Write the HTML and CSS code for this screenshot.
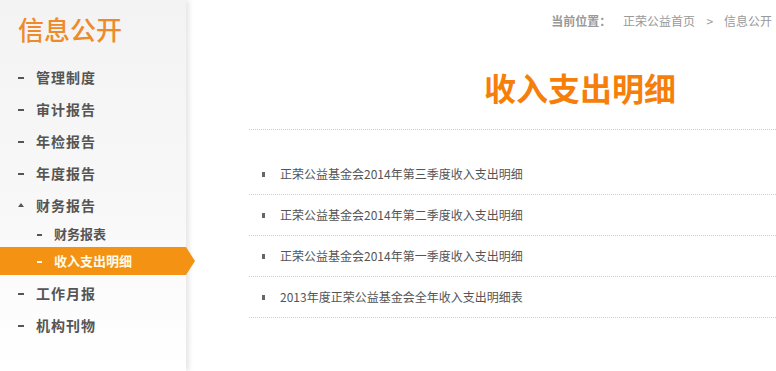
FILE: index.html
```html
<!DOCTYPE html>
<html lang="zh-CN">
<head>
<meta charset="utf-8">
<title>收入支出明细</title>
<link rel="stylesheet" href="styles.css">
</head>
<body>
<div class="page">
  <aside class="sidebar">
    <h2 class="side-title">信息公开</h2>
    <ul class="side-nav">
      <li class="nav-item"><a href="#">管理制度</a></li>
      <li class="nav-item"><a href="#">审计报告</a></li>
      <li class="nav-item"><a href="#">年检报告</a></li>
      <li class="nav-item"><a href="#">年度报告</a></li>
      <li class="nav-item open"><a href="#">财务报告</a>
        <ul class="sub-nav">
          <li class="sub-item"><a href="#">财务报表</a></li>
          <li class="sub-item active"><a href="#">收入支出明细</a></li>
        </ul>
      </li>
      <li class="nav-item"><a href="#">工作月报</a></li>
      <li class="nav-item"><a href="#">机构刊物</a></li>
    </ul>
  </aside>
  <main class="main">
    <div class="crumbs">
      <span class="crumb-label">当前位置：</span>
      <a href="#">正荣公益首页</a>
      <span class="crumb-sep">&gt;</span>
      <a href="#">信息公开</a>
    </div>
    <h1 class="page-title">收入支出明细</h1>
    <ul class="doc-list">
      <li><a href="#">正荣公益基金会2014年第三季度收入支出明细</a></li>
      <li><a href="#">正荣公益基金会2014年第二季度收入支出明细</a></li>
      <li><a href="#">正荣公益基金会2014年第一季度收入支出明细</a></li>
      <li><a href="#">2013年度正荣公益基金会全年收入支出明细表</a></li>
    </ul>
  </main>
</div>
</body>
</html>
```

FILE: styles.css
```css
html, body {
  margin: 0;
  padding: 0;
  background: #fff;
  overflow: hidden;
}
body {
  font-family: "Noto Sans CJK SC", "Liberation Sans", sans-serif;
  color: #555;
}
ul {
  list-style: none;
  margin: 0;
  padding: 0;
}
a {
  color: inherit;
  text-decoration: none;
}

.page {
  display: flex;
  width: 776px;
  height: 371px;
}

/* Sidebar */
.sidebar {
  position: relative;
  width: 186px;
  flex: none;
  height: 371px;
  background: linear-gradient(to bottom, #f3f3f3 0%, #f8f8f8 55%, #ffffff 100%);
  box-shadow: 3px 0 5px rgba(0, 0, 0, 0.10);
  z-index: 1;
}
.side-title {
  margin: 0;
  padding: 15px 0 18px 18px;
  font-size: 26px;
  line-height: 28px;
  font-weight: 500;
  color: #ef8a2b;
  letter-spacing: 0;
}
.nav-item > a {
  position: relative;
  display: block;
  height: 32px;
  line-height: 32px;
  padding-left: 36px;
  font-size: 14px;
  font-weight: 700;
  letter-spacing: 1px;
  color: #555;
}
.nav-item > a::before {
  content: "";
  position: absolute;
  left: 18px;
  top: 16px;
  width: 6px;
  height: 2px;
  background: #555;
}
.nav-item.open > a::before {
  top: 14px;
  width: 0;
  height: 0;
  background: none;
  border-left: 3px solid transparent;
  border-right: 3px solid transparent;
  border-bottom: 4px solid #555;
}
.sub-nav {
  margin-bottom: 2px;
}
.sub-item > a {
  position: relative;
  display: block;
  height: 26px;
  line-height: 26px;
  padding-left: 54px;
  font-size: 13px;
  font-weight: 700;
  color: #555;
}
.sub-item > a::before {
  content: "";
  position: absolute;
  left: 37px;
  top: 13px;
  width: 5px;
  height: 2px;
  background: #555;
}
.sub-item.active > a {
  height: 28px;
  line-height: 28px;
  background: #f39213;
  color: #fffbe8;
}
.sub-item.active > a::before {
  top: 14px;
  background: #fffbe8;
}
.sub-item.active > a::after {
  content: "";
  position: absolute;
  right: -9px;
  top: 0;
  width: 0;
  height: 0;
  border-top: 14px solid transparent;
  border-bottom: 14px solid transparent;
  border-left: 9px solid #f39213;
}

/* Main */
.main {
  flex: 1;
  min-width: 0;
  margin-left: 63px;
}
.crumbs {
  padding: 10px 4px 0 0;
  height: 22px;
  line-height: 22px;
  text-align: right;
  font-size: 12px;
  color: #999;
  white-space: nowrap;
}
.crumb-label {
  font-weight: 700;
  margin-right: 9px;
}
.crumb-sep {
  margin: 0 8px 0 9px;
}
.page-title {
  margin: 0;
  padding: 35px 0 22px 135px;
  height: 40px;
  line-height: 40px;
  text-align: center;
  font-size: 32px;
  font-weight: 700;
  color: #f67f0c;
  border-bottom: 1px dotted #cfcfcf;
}
.doc-list {
  padding-top: 24px;
}
.doc-list li {
  position: relative;
  height: 40px;
  line-height: 40px;
  padding-left: 31px;
  font-size: 12px;
  color: #555;
  border-bottom: 1px dotted #cfcfcf;
  white-space: nowrap;
}
.doc-list li::before {
  content: "";
  position: absolute;
  left: 13px;
  top: 18px;
  width: 3px;
  height: 5px;
  background: #666;
}
```
